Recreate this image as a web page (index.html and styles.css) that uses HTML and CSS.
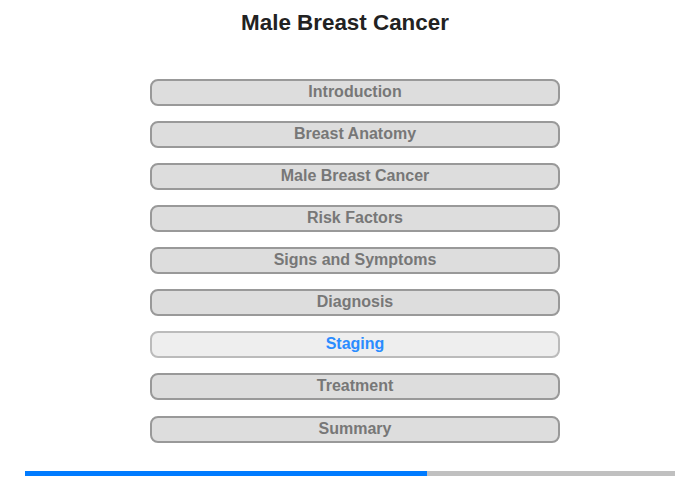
FILE: index.html
```html
<!DOCTYPE html>
<html><head>
<meta charset="UTF-8">
<title>Male Breast Cancer</title>
<link rel="stylesheet" href="styles.css">
</head>
<body>

<h1 class="title">Male Breast Cancer</h1>

<ul class="menu">
	<li class="item">Introduction</li>
	<li class="item">Breast Anatomy</li>
	<li class="item">Male Breast Cancer</li>
	<li class="item">Risk Factors</li>
	<li class="item">Signs and Symptoms</li>
	<li class="item">Diagnosis</li>
	<li class="item current">Staging</li>
	<li class="item">Treatment</li>
	<li class="item">Summary</li>
</ul>

<div class="progress"><div class="bar" style="width: 61.8%"></div></div>

</body>
</html>
```
FILE: styles.css
```css
body {
	margin: 0;
	background: #fff;
	font-family: 'Liberation Sans', Arial, sans-serif;}

.title {
	margin: 0;
	padding: 10px 10px 0 0;
	height: 27px;
	font: normal 700 22.4px/25px 'Liberation Sans', Arial, sans-serif;
	color: #222;
	text-align: center;}

.menu {
	list-style: none;
	margin: 41.6px 0 0 150px;
	padding: 0;
	width: 410px;
	display: flex;
	flex-direction: column;
	gap: 15.125px;}

.item {
	box-sizing: border-box;
	height: 27px;
	border: 2px solid #999;
	border-radius: 8px;
	background: #ddd;
	color: #777;
	font: normal 700 16px/22.4px 'Liberation Sans', Arial, sans-serif;
	text-align: center;}

.item.current {
	border-color: #bbb;
	background: #eee;
	color: #2a8cff;}

.progress {
	margin: 28.6px 25px 0;
	height: 5px;
	background: #c0c0c0;}

.progress .bar {
	height: 100%;
	background: #007bff;}
```
